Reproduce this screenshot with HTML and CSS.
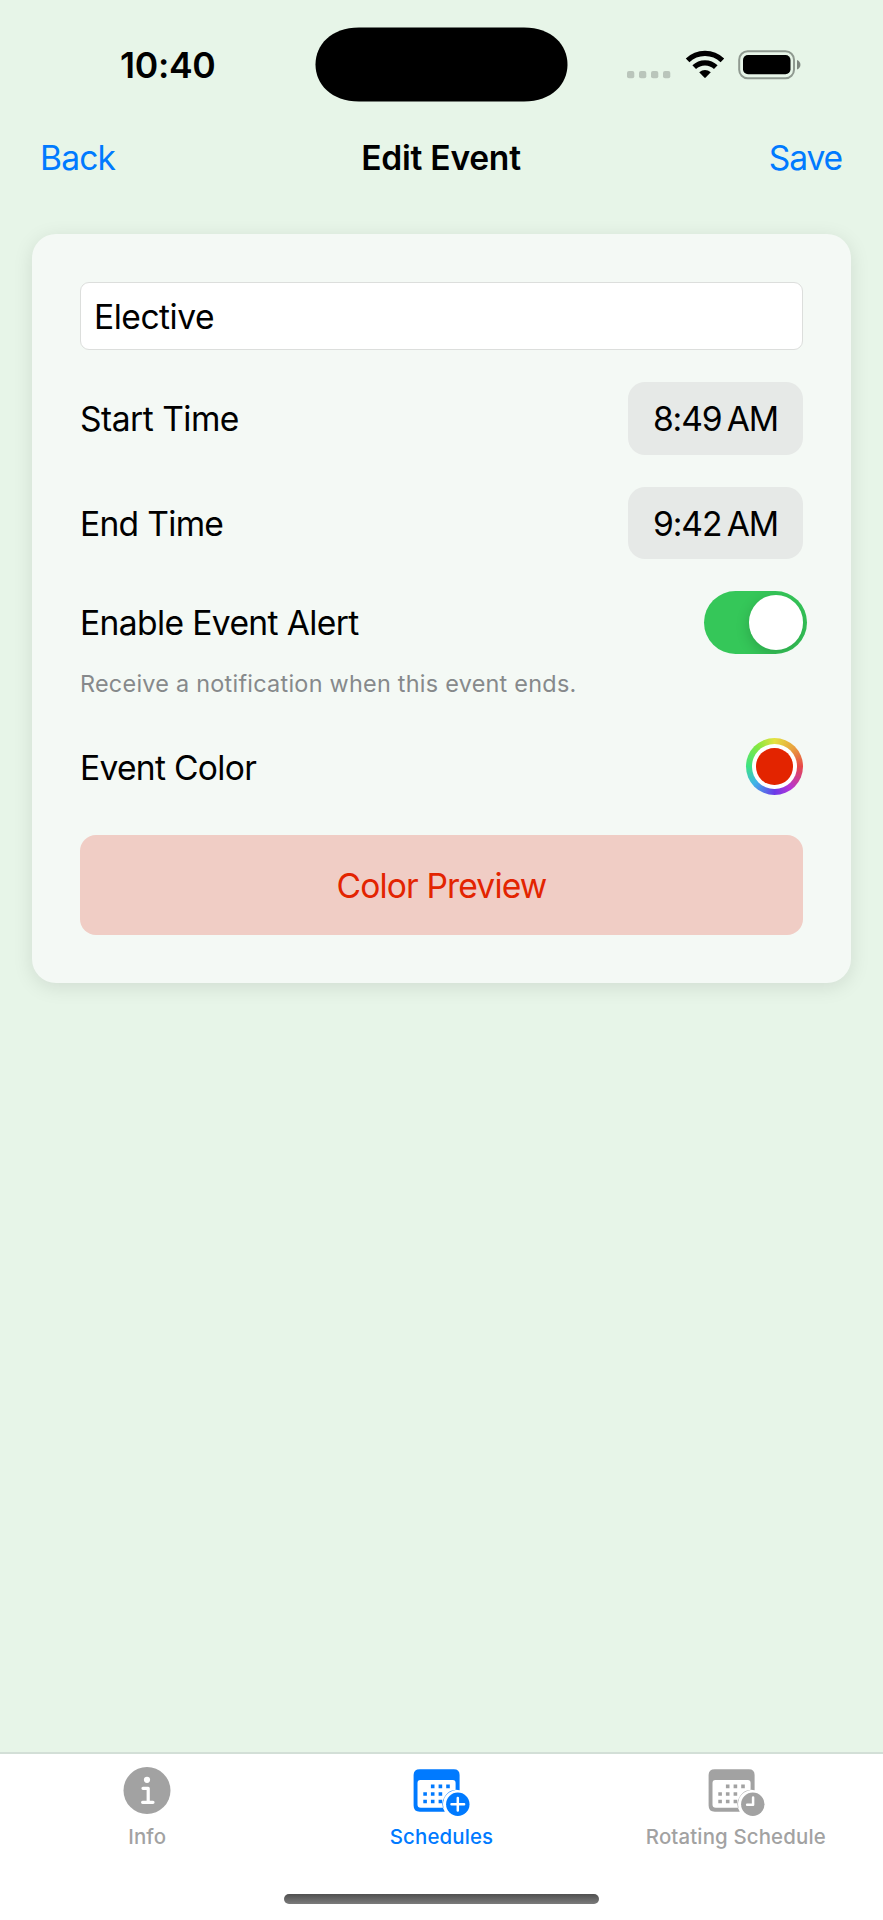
FILE: index.html
```html
<!DOCTYPE html>
<html lang="en">
<head>
<meta charset="utf-8">
<title>Edit Event</title>
<link rel="stylesheet" href="styles.css">
</head>
<body>
<div class="screen">
  <header class="status-bar">
    <div class="status-left"><span class="clock">10:40</span></div>
    <svg class="island" width="253" height="75" viewBox="0 0 253 75"><path d="M44 .5H209C237 .5 252.500 18 252.500 37.500S237 74.500 209 74.500H44C16 74.500 .5 57 .5 37.500S16 .5 44 .5Z"/></svg>
    <div class="status-right">
      <svg class="signal" width="44" height="8" viewBox="0 0 44 8"><g fill="#bac5bb"><rect x="0" y="0" width="7.300" height="7.300" rx="2"/><rect x="12" y="0" width="7.300" height="7.300" rx="2"/><rect x="24" y="0" width="7.300" height="7.300" rx="2"/><rect x="36" y="0" width="7.300" height="7.300" rx="2"/></g></svg>
      <svg class="wifi" width="40" height="29" viewBox="0 0 40 29"><g fill="none" stroke="#000" stroke-width="5.200"><path d="M2.600 10.400A25 25 0 0 1 37.400 10.400"/><path d="M9.200 17.200A15.500 15.500 0 0 1 30.800 17.200"/></g><path d="M14.200 22.200Q20 17.600 25.800 22.200L20.700 27.600Q20 28.200 19.300 27.600Z"/></svg>
      <svg class="battery" width="64" height="30" viewBox="0 0 64 30"><rect x="1.200" y="1.200" width="54.800" height="27" rx="8.500" fill="none" stroke="#8f9990" stroke-width="2"/><rect x="5" y="5" width="47.500" height="19.300" rx="5"/><path d="M59 10C63.600 11.500 63.600 18 59 19.500Z" fill="#7f8880"/></svg>
    </div>
  </header>
  <nav class="nav-bar">
    <a class="nav-link back">Back</a>
    <h1 class="nav-title">Edit Event</h1>
    <a class="nav-link save">Save</a>
  </nav>
  <main class="card">
    <div class="field"><span class="t-elective">Elective</span></div>
    <div class="row time-row"><span class="t-start">Start Time</span><span class="time-pill"><span class="t-time">8:49 AM</span></span></div>
    <div class="row time-row"><span class="t-end">End Time</span><span class="time-pill"><span class="t-time">9:42 AM</span></span></div>
    <div class="row alert-row"><span class="t-alert">Enable Event Alert</span><span class="toggle"><span class="knob"></span></span></div>
    <p class="hint"><span class="t-hint">Receive a notification when this event ends.</span></p>
    <div class="row color-row"><span class="t-color">Event Color</span><span class="well"><span class="well-gap"><span class="well-fill"></span></span></span></div>
    <div class="preview"><span class="t-preview">Color Preview</span></div>
  </main>
  <footer class="tab-bar">
    <div class="tabs">
      <div class="tab">
        <svg width="60" height="50" viewBox="0 0 60 50"><circle cx="30" cy="24.500" r="23.500" fill="#a2a2a2"/><circle cx="30" cy="13.800" r="3.100" fill="#fff"/><path d="M26 22.300H31.200V36.300M25.600 36.300H36" fill="none" stroke="#fff" stroke-width="3.200" stroke-linecap="round" stroke-linejoin="round"/></svg>
        <span class="tab-label t-info">Info</span>
      </div>
      <div class="tab active">
        <svg width="60" height="50" viewBox="0.7 0 60 50"><g fill="currentColor"><path fill-rule="evenodd" d="M9.500 3.300H43.500Q49.300 3.300 49.300 9V24.200A14.200 14.200 0 0 0 34.500 45.700H9.500Q3.300 45.700 3.300 39.500V9Q3.300 3.300 9.500 3.300ZM10 14Q7.200 14 7.200 17V38.500Q7.200 41.700 10.500 41.700H33.200A14.200 14.200 0 0 1 45.300 24V17Q45.300 14 42.500 14Z"/><path d="M20.600 18.600h3.600v3.600h-3.600zM28.300 18.600h3.600v3.600h-3.600zM35.900 18.600h3.600v3.600h-3.600zM13 26.200h3.600v3.600h-3.600zM20.600 26.200h3.600v3.600h-3.600zM28.300 26.200h3.600v3.600h-3.600zM13 33.700h3.600v3.600h-3.600zM20.600 33.700h3.600v3.600h-3.600zM28.300 33.700h3.600v3.600h-3.600z"/><circle cx="47.500" cy="38.300" r="11.700"/></g><path d="M47.500 32V44.600M41.200 38.300H53.800" stroke="#fff" stroke-width="2.500" stroke-linecap="round"/></svg>
        <span class="tab-label t-sched">Schedules</span>
      </div>
      <div class="tab">
        <svg width="60" height="50" viewBox="0.7 0 60 50"><g fill="currentColor"><path fill-rule="evenodd" d="M9.500 3.300H43.500Q49.300 3.300 49.300 9V24.200A14.200 14.200 0 0 0 34.500 45.700H9.500Q3.300 45.700 3.300 39.500V9Q3.300 3.300 9.500 3.300ZM10 14Q7.200 14 7.200 17V38.500Q7.200 41.700 10.500 41.700H33.200A14.200 14.200 0 0 1 45.300 24V17Q45.300 14 42.500 14Z"/><path d="M20.600 18.600h3.600v3.600h-3.600zM28.300 18.600h3.600v3.600h-3.600zM35.900 18.600h3.600v3.600h-3.600zM13 26.200h3.600v3.600h-3.600zM20.600 26.200h3.600v3.600h-3.600zM28.300 26.200h3.600v3.600h-3.600zM13 33.700h3.600v3.600h-3.600zM20.600 33.700h3.600v3.600h-3.600zM28.300 33.700h3.600v3.600h-3.600z"/><circle cx="47.500" cy="38.300" r="11.700"/></g><path d="M47.800 31.500V38.700H41.800" fill="none" stroke="#fff" stroke-width="2.500" stroke-linecap="round" stroke-linejoin="round"/></svg>
        <span class="tab-label t-rot">Rotating Schedule</span>
      </div>
    </div>
    <div class="home-indicator"></div>
  </footer>
</div>
</body>
</html>
```
FILE: styles.css
```css
* { box-sizing: border-box; }
body { margin: 0; background: #e7f5e8; font-family: Inter, "Liberation Sans", sans-serif; color: #000; }
.screen { width: 883px; height: 1920px; display: flex; flex-direction: column; background: #e7f5e8; font-size: 33.6px; line-height: 40px; white-space: nowrap; }
.status-bar { height: 130px; display: grid; grid-template-columns: 315px 253px 315px; flex: none; }
.status-left { padding: 46px 0 0 120px; }
.clock { font-size: 35.6px; font-weight: 600; letter-spacing: -0.3px; }
.island { margin-top: 27px; }
.status-right { display: flex; align-items: flex-start; padding-left: 59px; }
.signal { margin-top: 71px; }
.wifi { margin: 50px 0 0 13.500px; }
.battery { margin: 50px 0 0 13.500px; }
.nav-bar { height: 104px; display: grid; grid-template-columns: 1fr auto 1fr; padding: 8px 41px 0 40px; flex: none; }
.nav-link { color: #007aff; }
.back { letter-spacing: -0.8px; }
.save { text-align: right; letter-spacing: -1.1px; }
.nav-title { margin: 0; font-size: 33.6px; font-weight: 600; letter-spacing: -0.25px; line-height: 40px; }
.card { margin: 0 32px; height: 749px; padding: 48px; border-radius: 24px; background: #f4f9f5; box-shadow: 0 4px 20px rgba(0, 0, 0, .1); flex: none; }
.field { height: 68px; background: #fff; border: 1px solid #dcdedc; border-radius: 9px; padding: 13.500px 13px; }
.row { display: flex; justify-content: space-between; align-items: center; }
.time-row { margin-top: 32px; height: 72.500px; }
.time-pill { width: 175px; height: 72.500px; border-radius: 17px; background: #e6e9e7; display: flex; align-items: center; justify-content: center; }
.t-time { word-spacing: -3px; letter-spacing: -1.1px; padding-top: 2px; }
.t-start, .t-end, .t-alert, .t-color { padding-top: 2px; }
.alert-row { margin-top: 32px; height: 62.500px; }
.toggle { width: 103px; height: 62.500px; margin-right: -4px; border-radius: 32px; background: #35c759; padding: 4px; display: flex; justify-content: flex-end; overflow: hidden; }
.knob { width: 54.500px; height: 54.500px; border-radius: 50%; background: #fff; box-shadow: 0 4px 14px rgba(0, 0, 0, .18); }
.hint { margin: 15px 0 0; height: 30px; line-height: 30px; font-size: 23.400px; letter-spacing: .26px; color: #86898b; }
.color-row { margin-top: 39.500px; height: 57px; }
.well { width: 57px; height: 57px; border-radius: 50%; padding: 6.200px; background: conic-gradient(#e4e240, #e8a13e 45deg, #e84848 90deg, #b435d8 145deg, #6b3be8 180deg, #3fb4e8 230deg, #3de384 270deg, #84e840 320deg, #e4e240); }
.well-gap { display: block; width: 100%; height: 100%; border-radius: 50%; background: #fff; padding: 4px; }
.well-fill { display: block; width: 100%; height: 100%; border-radius: 50%; background: #e32400; }
.preview { margin-top: 40px; height: 100px; border-radius: 16px; background: #f0cdc5; color: #e32400; display: flex; align-items: center; justify-content: center; padding-top: 2px; }
.t-elective, .t-start { letter-spacing: -0.5px; }
.t-end, .t-color { letter-spacing: -0.7px; }
.t-alert { letter-spacing: -0.62px; }
.t-preview { letter-spacing: -0.85px; }
.tab-bar { margin-top: auto; height: 168px; border-top: 2px solid #d3dfd7; background: #fff; display: flex; flex-direction: column; align-items: center; flex: none; }
.tabs { display: grid; grid-template-columns: 1fr 1fr 1fr; width: 883px; padding-top: 12px; height: 140px; }
.tab { display: flex; flex-direction: column; align-items: center; color: #a2a2a2; }
.tab svg { flex: none; }
.tab.active { color: #007aff; }
.tab-label { margin-top: 8px; font-size: 20.400px; line-height: 26px; font-weight: 500; letter-spacing: .15px; }
.home-indicator { width: 315px; height: 10px; border-radius: 5px; background: linear-gradient(#505050, #7b7b7b); }
```
